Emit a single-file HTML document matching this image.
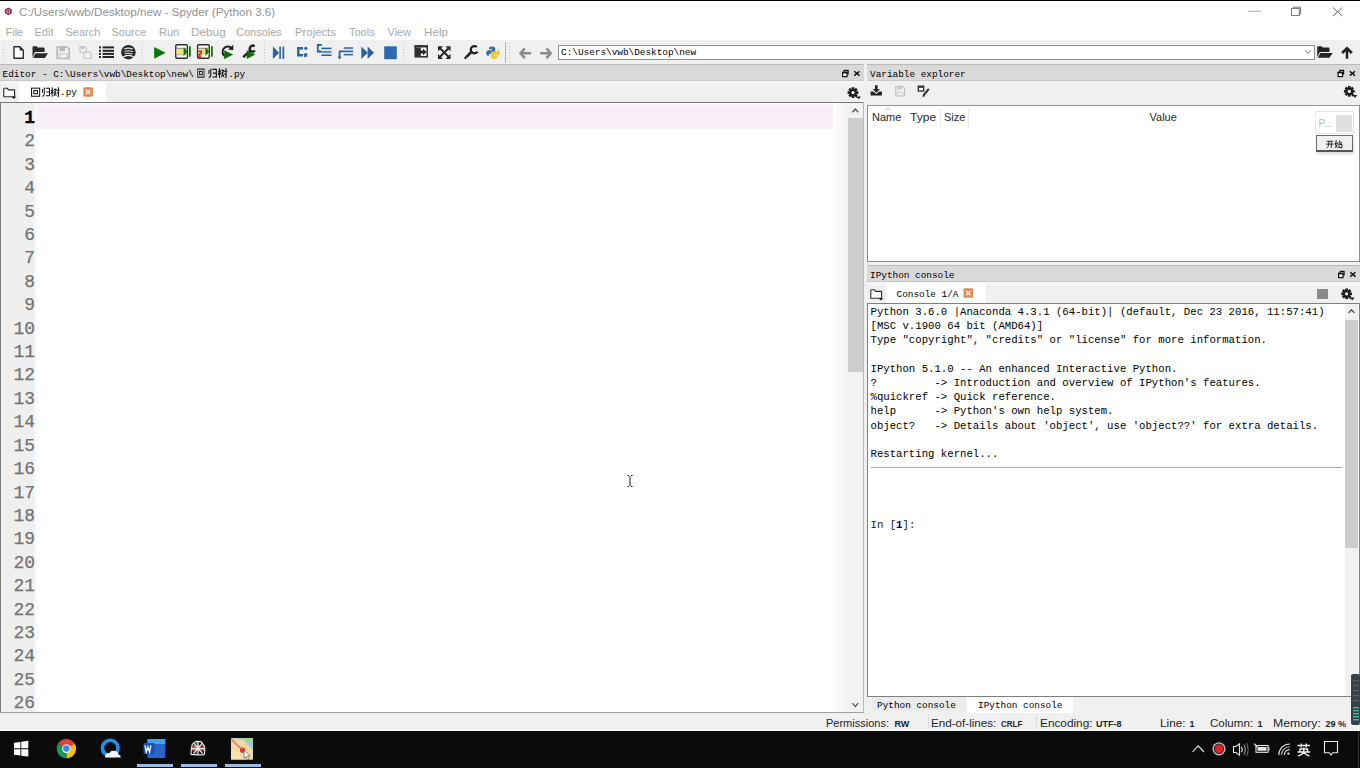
<!DOCTYPE html>
<html><head><meta charset="utf-8">
<style>
*{margin:0;padding:0;box-sizing:border-box}
html,body{width:1360px;height:768px;overflow:hidden;background:#f0f0f0;font-family:"Liberation Sans",sans-serif}
.a{position:absolute}
.t{position:absolute;line-height:0;white-space:pre}
.m{font-family:"Liberation Mono",monospace}
.ui{font-size:11px}
.mt{font-family:"Liberation Mono",monospace;font-size:9.38px;color:#000}
</style></head><body>
<!-- ===== window chrome ===== -->
<div class="a" style="left:0;top:0;width:1360px;height:1px;background:#000"></div>
<div class="a" style="left:0;top:1px;width:1360px;height:39px;background:#fff"></div>
<div class="t" style="left:19px;top:12px;font-size:11.65px;color:#929292">C:/Users/wwb/Desktop/new - Spyder (Python 3.6)</div>
<!-- menu -->
<div class="t ui" style="left:5.5px;top:31.5px;color:#a9a9a9">File</div>
<div class="t ui" style="left:34.5px;top:31.5px;color:#a9a9a9">Edit</div>
<div class="t ui" style="left:65.5px;top:31.5px;color:#a9a9a9">Search</div>
<div class="t ui" style="left:111.5px;top:31.5px;color:#a9a9a9">Source</div>
<div class="t ui" style="left:159px;top:31.5px;color:#a9a9a9">Run</div>
<div class="t ui" style="transform:scaleX(1.07);transform-origin:0 0;left:190.5px;top:31.5px;color:#a9a9a9">Debug</div>
<div class="t ui" style="left:236px;top:31.5px;color:#a9a9a9">Consoles</div>
<div class="t ui" style="transform:scaleX(1.03);transform-origin:0 0;left:294.5px;top:31.5px;color:#a9a9a9">Projects</div>
<div class="t ui" style="left:349px;top:31.5px;color:#a9a9a9">Tools</div>
<div class="t ui" style="left:387.5px;top:31.5px;color:#a9a9a9">View</div>
<div class="t ui" style="transform:scaleX(1.06);transform-origin:0 0;left:423.5px;top:31.5px;color:#a9a9a9">Help</div>

<!-- toolbar -->
<div class="a" style="left:0;top:40px;width:1360px;height:24px;background:#f0f0f0"></div>
<div class="a" style="left:558px;top:45px;width:757px;height:15px;background:#fff;border:1px solid #8f8f8f"></div>
<div class="t mt" style="left:561px;top:53px">C:\Users\vwb\Desktop\new</div>

<!-- ===== Editor pane ===== -->
<div class="a" style="left:0;top:64px;width:864px;height:1px;background:#b9b9b9"></div>
<div class="a" style="left:0;top:65px;width:864px;height:16px;background:#d9d9d9"></div>
<div class="a" style="left:0;top:80px;width:864px;height:1px;background:#c9c9c9"></div>
<div class="t mt" style="left:2.5px;top:74.6px">Editor - C:\Users\vwb\Desktop\new\</div>
<div class="t mt" style="left:228.3px;top:74.6px">.py</div>
<div class="a" style="left:0;top:81px;width:864px;height:3px;background:#f5f5f5"></div>
<div class="a" style="left:19px;top:82px;width:87px;height:20px;background:#fff"></div>
<div class="t mt" style="left:60px;top:93px">.py</div>
<!-- editor area -->
<div class="a" style="left:0;top:102px;width:864px;height:611px;background:#fff;border-top:1px solid #7a7a7a;border-left:1px solid #7a7a7a;border-bottom:1px solid #a0a0a0"></div>
<div class="a" style="left:1px;top:103px;width:33px;height:609px;background:#efefef"></div>
<div class="a" style="left:34px;top:103px;width:4px;height:609px;background:linear-gradient(90deg,#f4f4f4,#fff)"></div>
<div class="a" style="left:37px;top:103.5px;width:796px;height:25px;background:linear-gradient(180deg,#fcf6fc,#f7eef7 12%,#f7eef7 90%,#fbf6fb)"></div>
<div class="a" style="left:833px;top:103px;width:15px;height:609px;background:linear-gradient(90deg,#fff,#f5f5f5 60%,#f3f3f3)"></div>
<div class="a m" id="ln" style="left:0;top:107px;width:35px;font-size:18px;line-height:23.4px;color:#747474;text-align:right;-webkit-text-stroke:0.25px #747474"><div style="color:#000;font-weight:bold;-webkit-text-stroke:0.3px #000">1</div><div>2</div><div>3</div><div>4</div><div>5</div><div>6</div><div>7</div><div>8</div><div>9</div><div>10</div><div>11</div><div>12</div><div>13</div><div>14</div><div>15</div><div>16</div><div>17</div><div>18</div><div>19</div><div>20</div><div>21</div><div>22</div><div>23</div><div>24</div><div>25</div><div>26</div></div>
<!-- editor scrollbar -->
<div class="a" style="left:848px;top:103px;width:15px;height:609px;background:#f2f2f2"></div>
<div class="a" style="left:848px;top:118px;width:15px;height:254px;background:#cdcdcd"></div>
<div class="a" style="left:863px;top:102px;width:1px;height:611px;background:#b8b8b8"></div>

<!-- ===== Variable explorer ===== -->
<div class="a" style="left:867px;top:64px;width:493px;height:1px;background:#b9b9b9"></div>
<div class="a" style="left:867px;top:65px;width:493px;height:16px;background:#d9d9d9"></div>
<div class="a" style="left:867px;top:80px;width:493px;height:1px;background:#c9c9c9"></div>
<div class="a" style="left:864px;top:64px;width:3px;height:17px;background:#f0f0f0"></div>
<div class="t mt" style="left:870px;top:74.6px">Variable explorer</div>
<div class="a" style="left:867px;top:105px;width:493px;height:157px;background:#fff;border:1px solid #8c8c8c;border-top:1px solid #959595"></div>
<div class="a" style="left:939.5px;top:108px;width:1px;height:19px;background:#ececec"></div>
<div class="a" style="left:968px;top:108px;width:1px;height:19px;background:#ececec"></div>
<div class="t ui" style="left:872px;top:117px;color:#2a2a2a">Name</div>
<div class="t ui" style="transform:scaleX(1.1);transform-origin:0 0;left:910px;top:117px;color:#2a2a2a">Type</div>
<div class="t ui" style="left:944px;top:117px;color:#2a2a2a">Size</div>
<div class="t ui" style="left:1149.5px;top:117px;color:#2a2a2a">Value</div>
<!-- progress widget -->
<div class="a" style="left:1315px;top:111px;width:39px;height:23px;background:#fff;border:1px solid #e6e6e6"></div>
<div class="a" style="left:1336px;top:115px;width:16px;height:17px;background:#e0e0e0"></div>
<div class="t ui" style="left:1318.5px;top:124px;color:#b8b8b8;font-size:10px">P...</div>
<div class="a" style="left:1316px;top:135px;width:37px;height:17px;background:#f0f0f0;border:1px solid #6a6a6a;border-bottom:2px solid #555;box-shadow:1px 2px 3px rgba(0,0,0,.15)"></div>

<!-- ===== IPython console ===== -->
<div class="a" style="left:867px;top:265px;width:493px;height:1px;background:#b9b9b9"></div>
<div class="a" style="left:867px;top:266px;width:493px;height:16px;background:#d9d9d9"></div>
<div class="a" style="left:867px;top:281px;width:493px;height:1px;background:#c9c9c9"></div>
<div class="t mt" style="left:870px;top:276px">IPython console</div>
<div class="a" style="left:867px;top:282px;width:493px;height:3px;background:#f5f5f5"></div>
<div class="a" style="left:886px;top:283px;width:100px;height:20px;background:#fff"></div>
<div class="t mt" style="left:896.5px;top:294.5px">Console 1/A</div>
<div class="a" style="left:1316.5px;top:288.5px;width:11px;height:10.5px;background:#8a8a8a"></div>
<div class="a" style="left:867px;top:303px;width:493px;height:394px;background:#fff;border:1px solid #7f7f7f"></div>
<div class="a m" style="left:870.5px;top:305px;font-size:10.66px;line-height:14.2px;color:#000;white-space:pre">Python 3.6.0 |Anaconda 4.3.1 (64-bit)| (default, Dec 23 2016, 11:57:41)
[MSC v.1900 64 bit (AMD64)]
Type "copyright", "credits" or "license" for more information.

IPython 5.1.0 -- An enhanced Interactive Python.
?         -> Introduction and overview of IPython's features.
%quickref -> Quick reference.
help      -> Python's own help system.
object?   -> Details about 'object', use 'object??' for extra details.

Restarting kernel...




<span style="color:#161630">In [<b style="color:#000070">1</b>]:</span></div>
<div class="a" style="left:871px;top:467px;width:471px;height:1px;background:#a8a8a8"></div>
<!-- console scrollbar -->
<div class="a" style="left:1345px;top:304px;width:13px;height:392px;background:#f0f0f0"></div>
<div class="a" style="left:1345px;top:320px;width:13px;height:228px;background:#cdcdcd"></div>
<!-- bottom tabs -->
<div class="a" style="left:871.5px;top:697px;width:94px;height:14px;background:#ebebeb"></div>
<div class="a" style="left:967px;top:697px;width:106px;height:16px;background:#fff"></div>
<div class="t mt" style="left:877px;top:705.5px">Python console</div>
<div class="t mt" style="left:978px;top:705.5px">IPython console</div>

<!-- ===== status bar ===== -->
<div class="a" style="left:0;top:713px;width:1360px;height:17px;background:#f0f0f0"></div>
<div class="a" style="left:928px;top:715px;width:1px;height:14px;background:#dadada"></div>
<div class="a" style="left:1036px;top:715px;width:1px;height:14px;background:#dadada"></div>
<div class="t ui" style="left:826px;top:723px;color:#1e1e1e">Permissions:</div>
<div class="t" style="left:894.5px;top:724px;color:#1e1e1e;font-size:9px;font-weight:bold">RW</div>
<div class="t ui" style="transform:scaleX(1.058);transform-origin:0 0;left:931px;top:723px;color:#1e1e1e">End-of-lines:</div>
<div class="t" style="transform:scaleX(0.89);transform-origin:0 0;left:1000.5px;top:724px;color:#1e1e1e;font-size:9px;font-weight:bold">CRLF</div>
<div class="t ui" style="transform:scaleX(1.074);transform-origin:0 0;left:1039.5px;top:723px;color:#1e1e1e">Encoding:</div>
<div class="t" style="left:1096px;top:724px;color:#1e1e1e;font-size:9px;font-weight:bold">UTF-8</div>
<div class="t ui" style="transform:scaleX(1.07);transform-origin:0 0;left:1160px;top:723px;color:#1e1e1e">Line:</div>
<div class="t" style="left:1189.5px;top:724px;color:#1e1e1e;font-size:9px;font-weight:bold">1</div>
<div class="t ui" style="transform:scaleX(1.05);transform-origin:0 0;left:1210px;top:723px;color:#1e1e1e">Column:</div>
<div class="t" style="left:1257.5px;top:724px;color:#1e1e1e;font-size:9px;font-weight:bold">1</div>
<div class="t ui" style="transform:scaleX(1.12);transform-origin:0 0;left:1273px;top:723px;color:#1e1e1e">Memory:</div>
<div class="t" style="left:1325.5px;top:724px;color:#1e1e1e;font-size:9px;font-weight:bold">29 %</div>
<div class="a" style="left:0;top:730px;width:1360px;height:1px;background:#fafafa"></div>
<!-- ===== taskbar ===== -->
<div class="a" style="left:0;top:731px;width:1360px;height:37px;background:#0b0b0b"></div>

<!-- ICONS overlay -->
<svg class="a" style="left:0;top:0" width="1360" height="768" viewBox="0 0 1360 768">
<g id="icons">
<!-- toolbar grip -->
<g fill="#c8c8c8">
<rect x="3" y="43" width="1" height="1"/><rect x="3" y="46" width="1" height="1"/><rect x="3" y="49" width="1" height="1"/><rect x="3" y="52" width="1" height="1"/><rect x="3" y="55" width="1" height="1"/><rect x="3" y="58" width="1" height="1"/><rect x="3" y="61" width="1" height="1"/>
</g>
<!-- separators -->
<g stroke="#c4c4c4" stroke-width="1" stroke-dasharray="1 2">
<line x1="142" y1="43" x2="142" y2="62"/><line x1="264.5" y1="43" x2="264.5" y2="62"/><line x1="403.5" y1="43" x2="403.5" y2="62"/><line x1="509.5" y1="43" x2="509.5" y2="62"/>
</g>
<line x1="505.5" y1="42" x2="505.5" y2="63" stroke="#b8b8b8"/>
<!-- 1 new file -->
<path d="M14,46.8 H19.8 L23.3,50.3 V58.2 H14 Z" fill="#fff" stroke="#2e2e2e" stroke-width="1.4" stroke-linejoin="round"/>
<path d="M19.6,46.6 V50.5 H23.5 Z" fill="#2e2e2e"/>
<!-- 2 open folder -->
<path d="M32.5,47.5 Q32.5,46.3 33.6,46.3 H36.6 L38,47.6 H43.5 Q44.6,47.6 44.6,48.6 V52 H35 L32.5,57.5 Z" fill="#2a2a2a"/>
<path d="M35.6,53.2 H48 L44.8,57.9 H33 Z" fill="#2a2a2a"/>
<!-- 3 save (disabled) -->
<path d="M57.2,47 H67 L69.2,49.2 V58.4 H57.2 Z" fill="none" stroke="#b4b4b4" stroke-width="1.5"/>
<rect x="59.5" y="47" width="5.5" height="4.2" fill="#b8b8b8"/>
<rect x="59.2" y="54" width="8" height="4.4" fill="none" stroke="#c4c4c4" stroke-width="1"/>
<!-- 4 save all (disabled) -->
<g fill="none" stroke="#c8c8c8" stroke-width="1.2">
<path d="M80,46.5 H85 L86.3,47.8 V52.5 H80 Z"/>
<path d="M84,52 H90 L91.3,53.3 V58.5 H84 Z"/>
</g>
<rect x="81" y="46.5" width="3" height="2.3" fill="#bdbdbd"/>
<!-- 5 list -->
<g fill="#252525">
<rect x="99" y="46.4" width="2" height="2"/><rect x="102.6" y="46.4" width="11.4" height="2"/>
<rect x="99" y="49.8" width="2" height="2"/><rect x="102.6" y="49.8" width="11.4" height="2"/>
<rect x="99" y="52.9" width="2" height="2"/><rect x="102.6" y="52.9" width="11.4" height="2"/>
<rect x="99" y="56" width="2" height="2"/><rect x="102.6" y="56" width="11.4" height="2"/>
</g>
<!-- 6 circle icon -->
<circle cx="128.4" cy="52.2" r="7.3" fill="#2a2a2a"/>
<g fill="none" stroke="#e0e0e0" stroke-width="1.05" stroke-linecap="round">
<path d="M124.6,48.7 Q128.6,47.5 132.6,48.9"/><path d="M124.8,51.2 Q128.6,50.2 132.4,51.5"/><path d="M125.2,53.6 Q128.6,52.8 132,54"/>
</g>
<path d="M122.5,57.2 Q128.4,53.5 134.3,57.2" fill="none" stroke="#f0f0f0" stroke-width="1.3"/>
<!-- 7 run -->
<path d="M154.2,46.9 L165.6,52.7 L154.2,58.7 Z" fill="#0d750d"/>
<!-- 8 run cell -->
<rect x="175.8" y="44.8" width="11.6" height="13.4" rx="1" fill="#fff" stroke="#2e2e2e" stroke-width="1.4"/>
<rect x="176.5" y="48.6" width="10.3" height="5.9" fill="#f5e27a"/>
<line x1="176.5" y1="48.3" x2="186.8" y2="48.3" stroke="#555" stroke-width="0.7"/>
<line x1="176.5" y1="54.8" x2="186.8" y2="54.8" stroke="#888" stroke-width="0.6"/>
<path d="M183.6,47.3 L187.8,51.6 L183.6,56 Z" fill="#0d750d"/>
<rect x="189" y="46.3" width="1.8" height="10.4" fill="#0d750d"/>
<!-- 9 run cell advance -->
<rect x="197.6" y="44.8" width="11.6" height="13.4" rx="1" fill="#fff" stroke="#2e2e2e" stroke-width="1.4"/>
<rect x="198.3" y="48.6" width="10.3" height="5.9" fill="#f5e27a"/>
<line x1="198.3" y1="48.3" x2="208.6" y2="48.3" stroke="#555" stroke-width="0.7"/>
<path d="M205.4,47.3 L209.6,51.6 L205.4,56 Z" fill="#0d750d"/>
<rect x="211" y="46.3" width="1.8" height="10.4" fill="#0d750d"/>
<path d="M198.2,51.3 H201.3 V53.7 H199.6 V56.3" fill="none" stroke="#e8200e" stroke-width="1.6"/>
<path d="M197.6,55.6 L201.6,55.6 L199.6,59 Z" fill="#e8200e"/>
<!-- 10 re-run -->
<path d="M231.6,48.2 A5.3,5.3 0 1 0 225,56.4" fill="none" stroke="#1e1e1e" stroke-width="2"/>
<path d="M233.2,44.8 L233.3,50.2 L228.2,49.6 Z" fill="#1e1e1e"/>
<path d="M224.2,50.3 L233.1,54.6 L224.2,59.3 Z" fill="#0b6e0b"/>
<!-- 11 debug -->
<path d="M254.6,46.4 A2.9,2.9 0 1 0 254.8,50.6" fill="none" stroke="#1e1e1e" stroke-width="2.3"/>
<line x1="250" y1="50.8" x2="243.2" y2="57.2" stroke="#1e1e1e" stroke-width="2.4"/>
<path d="M246.8,50.2 L255.4,54.6 L246.8,59 Z" fill="#0b6e0b"/>
<!-- 12 debug step |>|| -->
<path d="M272.9,46.5 L279.1,52.7 L272.9,58.9 Z" fill="#2d6399"/>
<rect x="279.3" y="46.5" width="1.6" height="12.4" fill="#2d6399"/>
<rect x="282.5" y="46.5" width="1.7" height="12.4" fill="#2d6399"/>
<!-- 13 step -->
<path d="M303,48.2 H298.3 V55.2 H303" fill="none" stroke="#2d6399" stroke-width="2.4"/>
<circle cx="305.8" cy="48.3" r="1.6" fill="#2d6399"/>
<circle cx="305.8" cy="54.6" r="1.7" fill="#2d6399"/>
<path d="M303.5,54 L307.5,56.3 L304.5,57.6 Z" fill="#2d6399"/>
<!-- 14 step into -->
<path d="M321.8,45 H317.8 V51.6 H320" fill="none" stroke="#2d6399" stroke-width="1.8"/>
<path d="M319.5,49.8 L322,51.6 L319.5,53.4 Z" fill="#2d6399"/>
<g fill="#2d6399"><rect x="321.3" y="47.6" width="10.2" height="1.5"/><rect x="321.3" y="51.2" width="10.2" height="1.5"/><rect x="321.3" y="54.5" width="10.2" height="1.5"/></g>
<g fill="#a8c8e8"><rect x="322.5" y="49.1" width="9" height="0.8"/><rect x="322.5" y="52.7" width="9" height="0.8"/></g>
<!-- 15 step return -->
<path d="M344,51.4 H339.6 V57.5" fill="none" stroke="#2d6399" stroke-width="1.8"/>
<path d="M337.7,56.8 L341.5,56.8 L339.6,59.5 Z" fill="#2d6399"/>
<g fill="#2d6399"><rect x="343.7" y="47.3" width="9.4" height="1.5"/><rect x="343.7" y="50.6" width="9.4" height="1.5"/><rect x="343.7" y="53.9" width="9.4" height="1.5"/></g>
<g fill="#a8c8e8"><rect x="344.5" y="48.8" width="8.5" height="0.8"/><rect x="344.5" y="52.1" width="8.5" height="0.8"/></g>
<!-- 16 continue -->
<path d="M361.3,46.6 L367.8,52.7 L361.3,58.9 Z" fill="#2d6399"/>
<path d="M367.6,46.6 L374,52.7 L367.6,58.9 Z" fill="#2d6399"/>
<!-- 17 stop -->
<rect x="384.2" y="46.3" width="12.6" height="12.9" fill="#2e6ab0"/>
<!-- 18 maximize -->
<rect x="415.2" y="46.1" width="12" height="10.7" fill="#fff" stroke="#2e2e2e" stroke-width="1.5"/>
<rect x="414.5" y="45.3" width="13.4" height="2.2" fill="#2e2e2e"/>
<rect x="415.8" y="47.5" width="5" height="8.6" fill="#2e2e2e"/>
<path d="M420,50.4 H423 V48.4 L426.6,51.9 L423,55.4 V53.4 H420 Z" fill="#2e2e2e"/>
<!-- 19 fullscreen -->
<g stroke="#252525" stroke-width="2" fill="none"><line x1="440" y1="48.3" x2="448.5" y2="56.8"/><line x1="448.5" y1="48.3" x2="440" y2="56.8"/></g>
<g fill="#252525">
<path d="M438,46.2 H443 L438,51.2 Z"/><path d="M450.5,46.2 V51.2 L445.5,46.2 Z"/>
<path d="M438,59 V54 L443,59 Z"/><path d="M450.5,59 H445.5 L450.5,54 Z"/>
</g>
<!-- 20 wrench -->
<path d="M476.8,47 A3.6,3.6 0 1 0 477.4,51.6" fill="none" stroke="#222" stroke-width="2.3"/>
<line x1="471.3" y1="52" x2="465.5" y2="57.8" stroke="#222" stroke-width="2.6" stroke-linecap="round"/>
<circle cx="466.2" cy="57.2" r="0.55" fill="#ddd"/>
<!-- 21 python -->
<path d="M486.2,52.8 Q486.2,50.2 488.8,50.2 H492 V49.3 H489 V47.8 Q489,46.6 491.5,46.6 Q494.5,46.6 495.2,47.8 V52.3 Q495.2,53.8 493.6,53.8 H490.5 Q488.8,53.8 488.8,55.5 V56 Q486.2,56 486.2,52.8 Z" fill="#3b6fa6"/>
<path d="M500,52.6 Q500,55.2 497.4,55.2 H494.2 V56.1 H497.2 V57.6 Q497.2,59.1 494.7,59.1 Q491.7,59.1 491,57.6 V53.1 Q491,51.6 492.6,51.6 H495.7 Q497.4,51.6 497.4,49.9 V49.4 Q500,49.4 500,52.6 Z" fill="#f5c73c"/>
<!-- 22 back -->
<g stroke="#8c8c8c" stroke-width="2.6" fill="none" stroke-linejoin="miter">
<path d="M524.8,48.3 L520.6,53.2 L524.8,58.1"/><line x1="521" y1="53.2" x2="531" y2="53.2"/>
<path d="M546.5,48.3 L550.7,53.2 L546.5,58.1"/><line x1="540.2" y1="53.2" x2="550.2" y2="53.2"/>
</g>
<!-- combobox chevron -->
<path d="M1305.3,50.5 L1308.1,53.4 L1310.9,50.5" fill="none" stroke="#707070" stroke-width="1"/>
<!-- 25 open folder right -->
<path d="M1317.2,47.5 Q1317.2,46.3 1318.3,46.3 H1321.4 L1322.8,47.6 H1328.4 Q1329.5,47.6 1329.5,48.6 V52 H1319.8 L1317.2,57.3 Z" fill="#242424"/>
<path d="M1320.4,53.1 H1332.6 L1329.4,57.8 H1317.8 Z" fill="#242424"/>
<!-- 26 up arrow -->
<path d="M1342.1,53 L1347,48.4 L1351.9,53" fill="none" stroke="#242424" stroke-width="2.8"/>
<line x1="1347" y1="49" x2="1347" y2="58.8" stroke="#242424" stroke-width="2.5"/>

<!-- ===== pane title buttons ===== -->
<g id="undock">
</g>
<!-- pane undock/close buttons -->
<g id="btns">
<g transform="translate(0,0)">
<rect x="844.3" y="70.4" width="3.8" height="3.6" fill="none" stroke="#111" stroke-width="1.2"/>
<rect x="842.6" y="72.4" width="4.4" height="4.2" fill="#fff" stroke="#111" stroke-width="1.2"/>
<rect x="842.2" y="71.8" width="5" height="1.6" fill="#111"/>
<path d="M854.3,71.2 L859.5,75.6 M859.5,71.2 L854.3,75.6" stroke="#111" stroke-width="1.4"/>
</g>
<g transform="translate(495.5,0)">
<rect x="844.3" y="70.4" width="3.8" height="3.6" fill="none" stroke="#111" stroke-width="1.2"/>
<rect x="842.6" y="72.4" width="4.4" height="4.2" fill="#fff" stroke="#111" stroke-width="1.2"/>
<rect x="842.2" y="71.8" width="5" height="1.6" fill="#111"/>
<path d="M854.3,71.2 L859.5,75.6 M859.5,71.2 L854.3,75.6" stroke="#111" stroke-width="1.4"/>
</g>
<g transform="translate(496,201)">
<rect x="844.3" y="70.4" width="3.8" height="3.6" fill="none" stroke="#111" stroke-width="1.2"/>
<rect x="842.6" y="72.4" width="4.4" height="4.2" fill="#fff" stroke="#111" stroke-width="1.2"/>
<rect x="842.2" y="71.8" width="5" height="1.6" fill="#111"/>
<path d="M854.3,71.2 L859.5,75.6 M859.5,71.2 L854.3,75.6" stroke="#111" stroke-width="1.4"/>
</g>
</g>
<!-- gears -->
<defs>
<g id="gear">
<g fill="#1e1e1e">
<circle cx="0" cy="0" r="3.9"/>
<rect x="-1.3" y="-5.4" width="2.6" height="10.8"/>
<rect x="-5.4" y="-1.3" width="10.8" height="2.6"/>
<rect x="-1.3" y="-5.4" width="2.6" height="10.8" transform="rotate(45)"/>
<rect x="-1.3" y="-5.4" width="2.6" height="10.8" transform="rotate(-45)"/>
</g>
<circle cx="0" cy="0" r="1.6" fill="#fff"/>
<path d="M2.2,2.6 L4.6,4.6 L3.2,5.4 Z" fill="#1e1e1e"/><path d="M3.4,3.8 L8,3.8 L5.7,6.6 Z" fill="#1e1e1e"/>
</g>
<g id="folder">
<path d="M0.5,1.5 V9.5 H11.3 V2.6 H5.2 L4,1 H1 Z" fill="#fff" stroke="#2a2a2a" stroke-width="1.1" stroke-linejoin="round"/>
<path d="M8.4,9.4 L12.8,9.4 L10.6,11.8 Z" fill="#111"/>
</g>
<g id="close">
<rect x="0" y="0" width="9.6" height="9.5" rx="1.3" fill="#e28a55"/>
<path d="M2.6,2.6 L7,6.9 M7,2.6 L2.6,6.9" stroke="#fbe8dc" stroke-width="1.5"/>
</g>
</defs>
<use href="#gear" x="853" y="92.6"/>
<use href="#gear" x="1349.3" y="91.3"/>
<use href="#gear" x="1346.6" y="293.8"/>
<use href="#folder" x="3.3" y="87.3"/>
<use href="#folder" x="870.3" y="288.8"/>
<use href="#close" x="83.3" y="87.2"/>
<use href="#close" x="963.5" y="288.2"/>
<!-- var explorer toolbar -->
<path d="M875,85.3 H877.6 V89.3 H880 L876.3,92.8 L872.6,89.3 H875 Z" fill="#1e1e1e"/>
<path d="M870.6,91.6 H873.2 L876.3,94 L879.4,91.6 H881.9 V95.6 H870.6 Z" fill="#1e1e1e"/>
<path d="M895.8,86.3 H902.6 L904.5,88.2 V96 H895.8 Z" fill="none" stroke="#c0c0c0" stroke-width="1.2"/>
<rect x="897.5" y="86.3" width="4" height="3" fill="#c4c4c4"/>
<rect x="897.5" y="92.3" width="5.3" height="3.2" fill="none" stroke="#cdcdcd" stroke-width="0.8"/>
<rect x="918.3" y="86.2" width="5.4" height="4.8" fill="#fff" stroke="#2a2a2a" stroke-width="1.3"/>
<rect x="918.3" y="86.2" width="5.4" height="1.6" fill="#2a2a2a"/>
<line x1="928.8" y1="88.8" x2="923.2" y2="95.6" stroke="#2a2a2a" stroke-width="2"/>
<path d="M923.6,94.6 L922.2,97.6 L925,96" fill="#2a2a2a"/>
<!-- table sort caret -->
<path d="M885.5,110.3 L888.3,107.6 L891.1,110.3" fill="none" stroke="#b8b8b8" stroke-width="0.9"/>
<!-- scroll arrows -->
<path d="M852.4,112.2 L855.3,109 L858.2,112.2" fill="none" stroke="#505050" stroke-width="1.3"/>
<path d="M852.4,703.2 L855.3,706.6 L858.2,703.2" fill="none" stroke="#505050" stroke-width="1.3"/>
<path d="M1348.6,313 L1351.5,309.8 L1354.4,313" fill="none" stroke="#505050" stroke-width="1.3"/>
<!-- window controls -->
<line x1="1248.5" y1="11.3" x2="1261" y2="11.3" stroke="#b0b0b0" stroke-width="1"/>
<rect x="1291.5" y="8.5" width="7.8" height="7" fill="none" stroke="#7a7a7a" stroke-width="1"/>
<path d="M1293.3,8.5 V7.2 H1300.6 V14 H1299.3" fill="none" stroke="#7a7a7a" stroke-width="1"/>
<path d="M1332.9,7.5 L1342.2,16 M1342.2,7.5 L1332.9,16" stroke="#6a6a6a" stroke-width="1"/>
<!-- spyder app icon -->
<path d="M8.3,7.6 L11.8,9.5 V13.3 L8.3,15.2 L4.8,13.3 V9.5 Z" fill="#8c2a44"/>
<circle cx="8.3" cy="11.4" r="2" fill="#e9a6ba"/>
<circle cx="8.3" cy="11.4" r="0.9" fill="#6a1830"/>
<!-- I-beam cursor -->
<path d="M627.5,475.5 H629 M631,475.5 H632.5 M630,476 V486 M627.5,486.5 H629 M631,486.5 H632.5" stroke="#111" stroke-width="1"/>
<defs>
<g id="g_hui" fill="none" stroke-linecap="square"><rect x="0.6" y="0.6" width="8.8" height="8.8"/><rect x="3" y="3.2" width="4" height="3.4"/></g>
<g id="g_gui" fill="none"><path d="M1.3,1.8 V6"/><path d="M3.3,0.3 V6.5 Q3.3,8.8 1,9.8"/><path d="M5,1.1 H9.3 V9.5 M5.6,5 H9.3 M5,9 H9.3"/></g>
<g id="g_shu" fill="none"><path d="M0,3 H3.3 M1.7,0 V10 M1.7,3.6 L0,7 M1.8,4.2 L3.3,6"/><path d="M3.6,2.2 H5.9 L3.8,9.2 M4.2,4 L6.3,9"/><path d="M6.3,3 H10 M8.7,0 V9.2 Q8.7,10 7.8,9.8 M7,5.3 L7.7,6.8"/></g>
<g id="g_kai" fill="none"><path d="M0.8,1.3 H9.2 M0,5 H10 M3.4,1.3 V5.8 Q3.2,8.8 0.8,10 M6.8,1.3 V10"/></g>
<g id="g_shi" fill="none"><path d="M0,4 H4.3 M2.2,0 L1,6.5 L4,10 M3.6,4 Q3,8 0.3,10"/><path d="M6.8,0.5 L5.4,4 H9.3 M8.4,2.3 L9.5,3.8"/><rect x="5.6" y="5.8" width="3.8" height="3.8"/></g>
<g id="g_ying" fill="none"><path d="M0,2 H10 M3,0.3 V3.5 M7,0.3 V3.5"/><path d="M2,7 V4.6 H8 V7 M5,3.5 V7 M0,7 H10 M5,7 Q3.5,9.2 0.5,10 M5,7 Q6.5,9.2 9.5,10"/></g>
</defs>
<!-- editor title CJK -->
<g stroke="#111" stroke-width="1.15">
<use href="#g_hui" transform="translate(197.3,68.5) scale(0.72,0.92)"/>
<use href="#g_gui" transform="translate(207.8,68.3) scale(0.92,0.96)"/>
<use href="#g_shu" transform="translate(218,68.3) scale(0.93,0.96)"/>
</g>
<!-- tab CJK -->
<g stroke="#111" stroke-width="1.1">
<use href="#g_hui" transform="translate(31,87.6) scale(0.92,0.92)"/>
<use href="#g_gui" transform="translate(41.5,87.3) scale(0.86,0.95)"/>
<use href="#g_shu" transform="translate(50.7,87.3) scale(0.89,0.95)"/>
</g>
<!-- kaishi -->
<g stroke="#111" stroke-width="1.1">
<use href="#g_kai" transform="translate(1326,140.2) scale(0.78,0.78)"/>
<use href="#g_shi" transform="translate(1334.6,140) scale(0.78,0.8)"/>
</g>
<!-- taskbar -->
<!-- windows logo -->
<g fill="#fff">
<path d="M14,742.8 L20.4,741.9 V748.3 H14 Z"/><path d="M21.3,741.8 L28.3,740.8 V748.3 H21.3 Z"/>
<path d="M14,749.2 H20.4 V755.6 L14,754.7 Z"/><path d="M21.3,749.2 H28.3 V756.6 L21.3,755.7 Z"/>
</g>
<!-- chrome -->
<g transform="translate(66.4,748.6)">
<path d="M0,0 L-8.4,-4.85 A9.7,9.7 0 0 1 8.4,-4.85 Z" fill="#db4437"/>
<path d="M0,0 L8.4,-4.85 A9.7,9.7 0 0 1 0,9.7 Z" fill="#f4c20d"/>
<path d="M0,0 L0,9.7 A9.7,9.7 0 0 1 -8.4,-4.85 Z" fill="#0f9d58"/>
<circle r="4.3" fill="#fff"/><circle r="3.3" fill="#4285f4"/>
</g>
<!-- qq browser -->
<circle cx="110.2" cy="748" r="7.8" fill="none" stroke="#1e90f0" stroke-width="3.6"/>
<path d="M105,757.5 Q105,752.5 109.5,753 Q111,749.8 114.5,751 Q118,751 118.5,754.5 Q121,755 120.8,757.5 Z" fill="#f0f6fb"/>
<!-- word -->
<rect x="147.5" y="739" width="17.8" height="19" rx="1" fill="#2b65c9"/>
<rect x="147.5" y="739" width="17.8" height="5" fill="#41a5ee"/>
<rect x="143.5" y="743" width="11" height="11" rx="1" fill="#1852b8"/>
<path d="M144.9,745.3 L146.3,752 L147.9,747 L149.5,752 L150.9,745.3" fill="none" stroke="#fff" stroke-width="1.3"/>
<!-- spyder -->
<g transform="translate(198,748)">
<path d="M-5.5,-2.5 Q0,-4.2 5.8,-2.5 L6,3 Q0,4.6 -5.8,3 Z" fill="#d84850"/>
<circle cx="-1.2" cy="-4.2" r="1.7" fill="#2a7a4a"/><circle cx="-1.8" cy="3.9" r="1.8" fill="#2a6a40"/>
<circle cx="3.6" cy="-1.4" r="1.3" fill="#a02838"/><circle cx="3.6" cy="2.5" r="1.3" fill="#8a3050"/>
<g fill="none" stroke="#f0f0f0" stroke-width="1.1" stroke-linejoin="round">
<path d="M-2,-6.6 L3,-6.4 L6.6,-1.6 L6.8,2.8 L6.2,6.6 L0,6.9 L-7,6.4 L-6.7,1 L-5.8,-3.6 Z"/>
<path d="M-6.7,0.6 L6.7,0.6 M-4.6,-5.2 L4.6,5.6 M4.6,-5.2 L-4.6,5.6 M0,-6.5 V6.8"/>
</g>
</g>
<!-- map icon -->
<g>
<rect x="231" y="738" width="22" height="21.5" rx="1" fill="#f2d9a0"/>
<path d="M242,738 H253 V750 Z" fill="#9fd49a"/>
<path d="M231,738 H242 L253,750 V742 Z" fill="#9cc8ee" opacity="0.8"/>
<path d="M231,749 L253,759.5 H231 Z" fill="#f7e2b0"/>
<path d="M231.5,739.5 L243,750.5" stroke="#e07070" stroke-width="1.6"/>
<circle cx="242.5" cy="750.2" r="2.6" fill="#e03a3a"/>
<path d="M244,750 V758.5 L246,756.6 L247.6,760 L249,759.3 L247.5,756 H250.2 Z" fill="#fff" stroke="#222" stroke-width="0.5"/>
</g>
<!-- running indicators -->
<g fill="#9dbbe0">
<rect x="137" y="764" width="36" height="3"/><rect x="181" y="764" width="36" height="3"/><rect x="225" y="764" width="36" height="3"/>
</g>
<!-- tray -->
<path d="M1192.5,752 L1198.2,745.8 L1204,752" fill="none" stroke="#e8e8e8" stroke-width="1.1"/>
<circle cx="1219" cy="748.8" r="6.6" fill="#bdbdbd"/>
<circle cx="1219" cy="748.8" r="5.2" fill="#222"/>
<circle cx="1219" cy="748.8" r="4.2" fill="#e52020"/>
<g fill="none" stroke="#e6e6e6" stroke-width="1.1">
<path d="M1233.5,746.5 H1236 L1239.5,743.8 V755.2 L1236,752.5 H1233.5 Z"/>
<path d="M1241.5,746.7 Q1243,749.5 1241.5,752.3"/><path d="M1244,744.6 Q1246.6,749.5 1244,754.4" stroke="#9a9a9a"/><path d="M1246.5,743 Q1249.8,749.5 1246.5,756" stroke="#6a6a6a"/>
</g>
<g fill="#e6e6e6">
<rect x="1256" y="745.5" width="12" height="6.8" fill="none" stroke="#e6e6e6" stroke-width="1.1"/>
<rect x="1257.5" y="747" width="9" height="3.8"/>
<rect x="1268.3" y="747.3" width="1.2" height="3.2"/>
<path d="M1254,743.6 L1257.5,747" stroke="#e6e6e6" stroke-width="1.1"/>
</g>
<g fill="none" stroke="#e6e6e6" stroke-width="1.1">
<path d="M1278.8,755 A11,11 0 0 1 1289.8,744"/><path d="M1281.6,755 A8.2,8.2 0 0 1 1289.8,746.8" stroke="#bbb"/><path d="M1284.4,755 A5.4,5.4 0 0 1 1289.8,749.6"/>
</g>
<circle cx="1288.4" cy="753.6" r="1.2" fill="#e6e6e6"/>
<g stroke="#ececec" stroke-width="1.15"><use href="#g_ying" transform="translate(1297.5,743) scale(1.25,1.3)"/></g>
<path d="M1324.5,741.5 H1337.5 V752.8 H1332.6 L1331,755 L1329.4,752.8 H1324.5 Z" fill="none" stroke="#ececec" stroke-width="1.1"/>
<!-- right-edge widget -->
<rect x="1351" y="674" width="9" height="51" rx="2" fill="#3a4048"/>
<g fill="#3fb89a"><rect x="1353" y="707" width="6" height="1.4"/><rect x="1353" y="710" width="6" height="1.4"/><rect x="1353" y="713" width="6" height="1.4"/><rect x="1353" y="716" width="6" height="1.4"/><rect x="1353" y="719" width="6" height="1.4"/></g>
<g fill="#58606a"><rect x="1353" y="680" width="6" height="1.2"/><rect x="1353" y="685" width="6" height="1.2"/><rect x="1353" y="690" width="6" height="1.2"/><rect x="1353" y="695" width="6" height="1.2"/><rect x="1353" y="700" width="6" height="1.2"/></g>
<line x1="1358.5" y1="731" x2="1358.5" y2="768" stroke="#333" stroke-width="1"/>

</g>
</svg>
</body></html>
